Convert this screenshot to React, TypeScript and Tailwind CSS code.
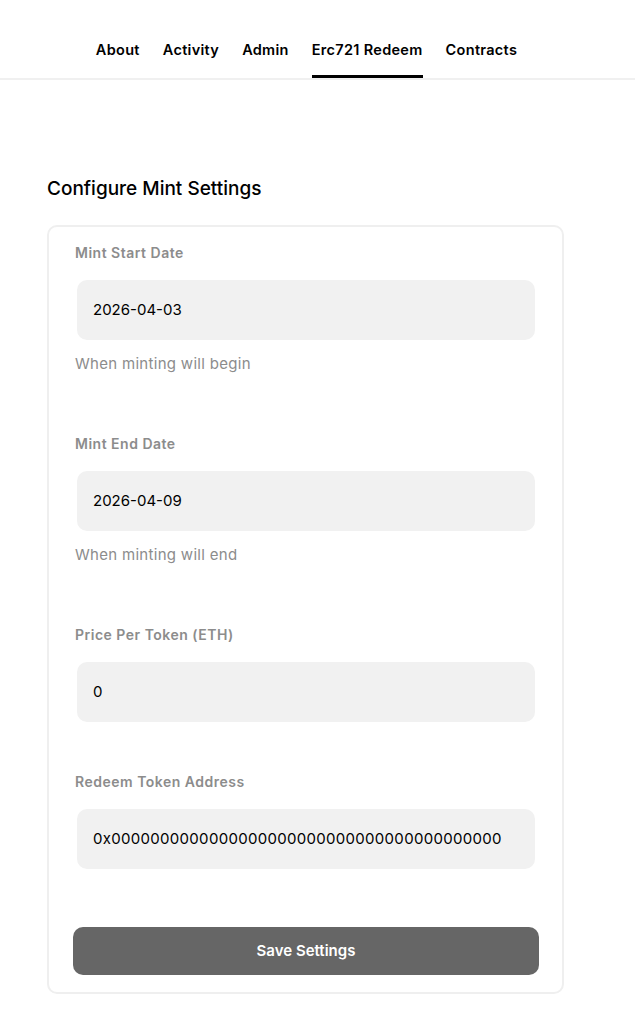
import React from 'react'

const fields = [
  { label: 'Mint Start Date', value: '2026-04-03', help: 'When minting will begin' },
  { label: 'Mint End Date', value: '2026-04-09', help: 'When minting will end' },
  { label: 'Price Per Token (ETH)', value: '0' },
  { label: 'Redeem Token Address', value: '0x0000000000000000000000000000000000000000', mono: true },
]

const tabs = ['About', 'Activity', 'Admin', 'Erc721 Redeem', 'Contracts']

export default function App() {
  return (
    <div className="min-h-screen bg-white text-black" style={{ fontFamily: 'Inter, "Noto Sans", sans-serif' }}>
      {/* Tabs */}
      <nav className="flex h-[80px] justify-center gap-[23px] border-b-2 border-[#f0f0f0] pr-[22px]">
        {tabs.map((t) => (
          <div
            key={t}
            className={`flex h-full items-start pt-[40px] text-[14.5px] font-semibold leading-[20px] tracking-[0.3px] ${
              t === 'Erc721 Redeem' ? 'border-b-[3px] border-black' : ''
            }`}
          >
            {t}
          </div>
        ))}
      </nav>

      <main className="px-[47px] pt-[97px] pb-8">
        <h2 className="mb-[24px] text-[19px] font-medium leading-[24px]">Configure Mint Settings</h2>
        <div className="w-[517px] rounded-[10px] border-2 border-[#efefef] px-[24px] pt-[15px] pb-[17px]">
          {fields.map((f) => (
            <div key={f.label} className={f.help ? 'mb-[59px]' : 'mb-[49px]'}>
              <label className="ml-[2px] block pt-[1px] text-[14px] font-semibold leading-[19px] tracking-[0.5px] text-[#8c8c8c]">
                {f.label}
              </label>
              <div
                className={`ml-[4px] mt-[18px] flex h-[60px] w-[458px] items-center rounded-[10px] bg-[#f1f1f1] px-4 text-[15px] ${
                  f.mono ? 'tracking-[0.3px]' : ''
                }`}
              >
                {f.value}
              </div>
              {f.help && (
                <p className="ml-[2px] mt-[14px] text-[15px] leading-[20px] tracking-[0.3px] text-[#8c8c8c]">{f.help}</p>
              )}
            </div>
          ))}
          <button className="mt-[9px] h-[48px] w-[466px] rounded-[10px] bg-[#666666] text-[15px] font-semibold text-white">
            Save Settings
          </button>
        </div>
      </main>
    </div>
  )
}
